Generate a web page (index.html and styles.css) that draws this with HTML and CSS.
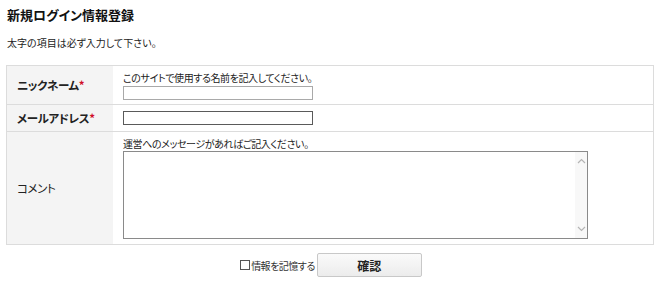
FILE: index.html
```html
<!DOCTYPE html>
<html lang="ja">
<head>
    <meta charset="UTF-8">
    <title>新規ログイン情報登録</title>
    <link rel="stylesheet" href="styles.css">
</head>
<body>
    <div class="container">
        <h2>新規ログイン情報登録</h2>
        <p class="note"><b>太字</b>の項目は必ず入力して下さい。</p>
        <form id="loginForm" autocomplete="off">
            <table class="form-table">
                <tr class="row-nick">
                    <th class="required">ニックネーム<span class="star">*</span></th>
                    <td>
                        <span class="hint">このサイトで使用する名前を記入してください。</span>
                        <input type="text" id="nickname" class="field-nick">
                    </td>
                </tr>
                <tr class="row-mail">
                    <th class="required">メールアドレス<span class="star">*</span></th>
                    <td>
                        <input type="text" id="email" class="field-mail">
                    </td>
                </tr>
                <tr class="row-comment">
                    <th>コメント</th>
                    <td>
                        <span class="hint">運営へのメッセージがあればご記入ください。</span>
                        <div class="textarea-wrap">
                            <textarea id="comment"></textarea>
                            <!-- fake scrollbar arrows like the classic widget -->
                            <div class="scroll-strip">
                                <svg width="9" height="6" viewBox="0 0 9 6"><path d="M1 5 L4.5 1.5 L8 5" fill="none" stroke="#b5b5b5" stroke-width="1.2"/></svg>
                                <svg width="9" height="6" viewBox="0 0 9 6"><path d="M1 1 L4.5 4.5 L8 1" fill="none" stroke="#b5b5b5" stroke-width="1.2"/></svg>
                            </div>
                        </div>
                    </td>
                </tr>
            </table>
            <div class="actions">
                <label class="remember"><span class="box"></span>情報を記憶する</label>
                <button type="submit" class="btn">確認</button>
            </div>
        </form>
    </div>
</body>
</html>
```

FILE: styles.css
```css
body {
    font-family: "Noto Sans CJK JP", "Noto Sans", sans-serif;
    font-feature-settings: "palt";
    font-size: 10px;
    color: #222;
    background: #fff;
    margin: 0;
    padding: 0;
}
.container {
    padding: 6px 7px 0 6px;
}
h2 {
    font-size: 13px;
    font-weight: bold;
    color: #111;
    margin: 0 0 0 1px;
    line-height: 18px;
}
.note {
    margin: 11px 0 0 1px;
    line-height: 16px;
}
.note b {
    font-weight: normal;
}
.form-table {
    width: 648px;
    margin-top: 14px;
    border-collapse: collapse;
    border: 1px solid #dcdcdc;
}
.form-table th, .form-table td {
    border-top: 1px solid #dcdcdc;
    border-bottom: 1px solid #dcdcdc;
}
.form-table th {
    width: 96px;
    background: #f4f4f4;
    text-align: left;
    font-weight: normal;
    padding: 0 0 0 10px;
    vertical-align: middle;
    font-size: 11.5px;
    letter-spacing: -0.4px;
}
.form-table th.required {
    font-weight: bold;
}
.star {
    color: #d0102a;
}
.form-table td {
    padding: 3px 10px 4px 10px;
    vertical-align: top;
}
.hint {
    display: block;
    line-height: 17px;
    letter-spacing: -0.4px;
}
input[type="text"] {
    display: block;
    box-sizing: border-box;
    width: 190px;
    height: 14px;
    margin: 0;
    padding: 0 2px;
    border: 1px solid #a9a9a9;
}
.row-mail td {
    padding: 6px 10px 6px 10px;
}
.field-mail {
    border-color: #5a5a5a !important;
}
.row-comment td {
    padding: 4px 10px 5px 10px;
}
.row-comment .hint {
    line-height: 15px;
}
.textarea-wrap {
    position: relative;
    width: 465px;
}
textarea {
    display: block;
    box-sizing: border-box;
    width: 465px;
    height: 88px;
    margin: 0;
    border: 1px solid #8a8a8a;
    resize: none;
}
.scroll-strip {
    position: absolute;
    top: 1px;
    right: 1px;
    bottom: 1px;
    width: 12px;
    background: #f8f8f8;
    display: flex;
    flex-direction: column;
    justify-content: space-between;
    align-items: center;
    padding: 6px 0 6px;
    box-sizing: border-box;
}
.actions {
    display: flex;
    justify-content: center;
    align-items: center;
    width: 648px;
    margin-top: 8px;
    padding-left: 1px;
}
.remember {
    display: flex;
    align-items: center;
    color: #333;
    margin-right: 2px;
    letter-spacing: -0.5px;
}
.box {
    width: 8px;
    height: 8px;
    border: 1px solid #555;
    margin-right: 1px;
}
.btn {
    width: 105px;
    height: 24px;
    background: linear-gradient(#fafafa, #ececec);
    border: 1px solid #c8c8c8;
    border-radius: 2px;
    font-family: inherit;
    font-size: 12px;
    font-weight: bold;
    color: #222;
    padding: 0;
}
```
